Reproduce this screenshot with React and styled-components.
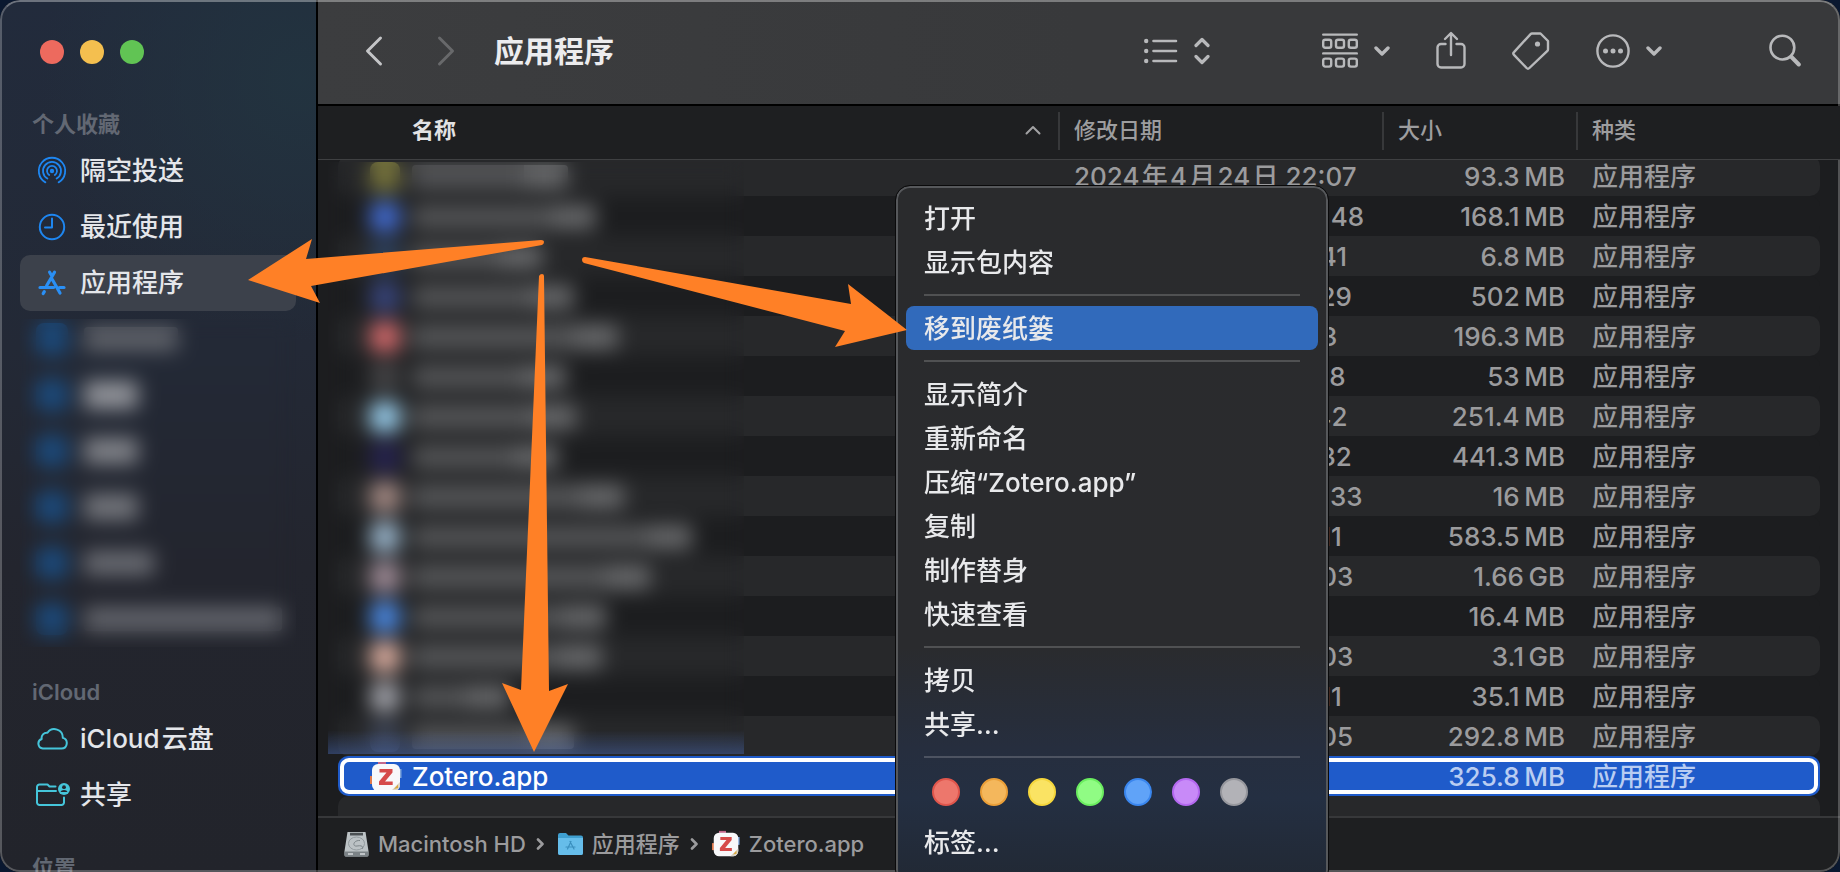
import React, { useLayoutEffect, useRef } from 'react';
import styled, { createGlobalStyle, css } from 'styled-components';

const GlobalStyle = createGlobalStyle`
  *, *::before, *::after { box-sizing: border-box; }
  body {
    margin: 0;
    background: #0a1830;
    color: #e6e6e8;
    font-family: Inter, "Noto Sans CJK SC", sans-serif;
    font-size: 26px;
    line-height: 36px;
  }
  button {
    margin: 0;
    padding: 0;
    border: 0;
    background: none;
    color: inherit;
    font: inherit;
    text-align: left;
  }
  svg { display: block; flex: none; }
`;

const Window = styled.div`
  position: relative;
  display: flex;
  height: 100vh;
  min-height: 600px;
  border-radius: 20px;
  overflow: hidden;
  background: #1c1d1f;

  &::after {
    content: '';
    position: absolute;
    inset: 0;
    border: 2px solid rgba(255, 255, 255, 0.24);
    border-top-color: rgba(255, 255, 255, 0.34);
    border-radius: 20px;
    pointer-events: none;
  }
`;

/* ---------- sidebar ---------- */

const Sidebar = styled.aside`
  flex: none;
  width: 318px;
  padding: 40px 20px 0;
  overflow: hidden;
  border-right: 2px solid #000;
  background:
    radial-gradient(circle at 300px 80px, rgba(34, 52, 64, 0.9), rgba(34, 48, 60, 0) 260px),
    linear-gradient(#222b3c, #232936 40%, #23252e 65%, #22242b);
`;

const TrafficLights = styled.div`
  display: flex;
  gap: 16px;
  height: 39px;
  padding-left: 20px;
`;

const Light = styled.button`
  width: 24px;
  height: 24px;
  border-radius: 50%;
  background: ${(p) => p.$color};
`;

const SectionTitle = styled.h2`
  margin: 0;
  padding: 30px 12px 4px;
  color: #626873;
  font-size: 22px;
  line-height: 30px;
  font-weight: 600;
`;

const PlaceList = styled.ul`
  margin: 0;
  padding: 0;
  list-style: none;
`;

const Place = styled.a`
  display: flex;
  align-items: center;
  gap: 12px;
  height: 56px;
  padding-left: 16px;
  border-radius: 10px;
  color: #e4e6ea;
  font-weight: 500;
  text-decoration: none;
  background: ${(p) => (p.$current ? '#3c414b' : 'transparent')};
`;

const Redacted = styled.div`
  position: relative;

  &::after {
    content: '';
    position: absolute;
    inset: 8px 0 0;
    backdrop-filter: blur(10px);
  }
`;

const HiddenPlace = styled.div`
  display: flex;
  align-items: center;
  gap: 16px;
  height: 56px;
  padding-left: 16px;
`;

const Blob = styled.span`
  flex: none;
  width: ${(p) => p.$size}px;
  height: ${(p) => p.$size}px;
  border-radius: 8px;
  background: ${(p) => p.$color};
`;

const Bar = styled.span`
  flex: none;
  width: ${(p) => p.$width}px;
  height: ${(p) => p.$height || 24}px;
  border-radius: 4px;
  background: ${(p) => p.$color};
`;

/* A file name reads as a dim stem with a denser extension at its end. */
const NameBar = styled(Bar)`
  background: linear-gradient(to left, #67686a 44px, #545557 44px);
`;

/* ---------- toolbar ---------- */

const Main = styled.main`
  flex: 1;
  min-width: 0;
  display: flex;
  flex-direction: column;
`;

const Toolbar = styled.header`
  flex: none;
  display: flex;
  align-items: center;
  height: 106px;
  padding: 0 39px 2px 20px;
  border-bottom: 2px solid #000;
  background: linear-gradient(90deg, #3c3d3f, #38393b 50%, #38393b);
  color: #b8b9bb;
`;

const NavButton = styled.button`
  display: flex;
  justify-content: center;
  width: 72px;
  color: ${(p) => (p.disabled ? '#68696b' : '#c4c5c7')};
`;

const Title = styled.h1`
  flex: 1;
  margin: 0 0 0 12px;
  color: #ececee;
  font-size: 30px;
  line-height: 40px;
  font-weight: 700;
`;

const ToolButton = styled.button`
  display: flex;
  align-items: center;
  gap: 16px;
`;

const ViewButton = styled(ToolButton)`
  margin-right: 112px;
`;

const ToolGroup = styled.div`
  display: flex;
  align-items: center;
  gap: 46px;
  margin-right: 107px;
`;

/* ---------- file list ---------- */

const ListPane = styled.div`
  position: relative;
  flex: 1;
  min-height: 0;
`;

const Scroller = styled.div`
  height: 100%;
  overflow: auto;
  scrollbar-width: none;
`;

const FileTable = styled.table`
  width: 100%;
  table-layout: fixed;
  border-collapse: separate;
  border-spacing: 0;
`;

const Col = styled.col`
  width: ${(p) => p.$width}px;
`;

const HeadCell = styled.th`
  position: sticky;
  top: 0;
  z-index: 2;
  height: 54px;
  padding: 6px 0 9px;
  border-bottom: 1px solid #3f4042;
  background: #1e1f21;
  font-weight: 400;
`;

const SortButton = styled.button`
  display: flex;
  align-items: center;
  width: 100%;
  height: 38px;
  padding: 0 0 2px 14px;
  border-left: 2px solid #37383a;
  color: #9d9d9f;
  font-size: 22px;
  line-height: 30px;
  font-weight: 500;

  ${(p) => p.$active && css`
    justify-content: space-between;
    padding: 0 17px 2px 74px;
    border-left: 0;
    color: #e2e2e4;
    font-weight: 700;
  `}
`;

const Row = styled.tr`
  position: relative;
  color: ${(p) => (p.$selected ? '#b9cdf2' : '#9b9b9d')};
  --fill: ${(p) => (p.$selected ? '#1f5bca' : '#1c1d1f')};

  &:nth-child(odd) { --fill: #27282a; }
`;

const Cell = styled.td`
  height: 40px;
  padding: 2px 0 0 16px;
  background: var(--fill);
  line-height: 38px;
  font-weight: 500;
  white-space: nowrap;
`;

const GutterCell = styled.td`
  padding: 0;
`;

const NameCell = styled(Cell)`
  padding-left: 32px;
  border-radius: 10px 0 0 10px;
  color: #fff;

  ${(p) => p.$ring && css`
    &::after {
      content: '';
      position: absolute;
      inset: 2px 22px;
      border: 4px solid #fff;
      border-radius: 9px;
    }
  `}
`;

const SizeCell = styled(Cell)`
  padding: 2px 11px 0 0;
  text-align: right;
`;

const KindCell = styled(Cell)`
  border-radius: 0 10px 10px 0;
`;

const FileName = styled.div`
  display: flex;
  align-items: center;
  gap: ${(p) => p.$gap || 10}px;
  height: 38px;
`;

const HiddenNames = styled.div`
  position: absolute;
  top: 56px;
  bottom: 62px;
  left: 10px;
  width: 416px;
  backdrop-filter: blur(10px);
  background: linear-gradient(to top, rgba(72, 104, 176, 0.45), rgba(72, 104, 176, 0) 24px);
`;

/* ---------- path bar ---------- */

const PathBar = styled.nav`
  flex: none;
  height: 56px;
  border-top: 2px solid #37383a;
  background: #1e1f21;
`;

const PathList = styled.ol`
  display: flex;
  align-items: center;
  gap: 14px;
  height: 52px;
  margin: 0;
  padding: 0 0 0 26px;
  list-style: none;
`;

const PathItem = styled.li`
  display: flex;
  align-items: center;
  gap: 10px;
`;

const PathLink = styled.a`
  display: flex;
  align-items: center;
  gap: 9px;
  color: #9b9b9d;
  font-size: 22px;
  line-height: 30px;
  font-weight: 500;
  text-decoration: none;
`;

/* ---------- context menu ---------- */

const Menu = styled.div`
  position: absolute;
  z-index: 3;
  top: 186px;
  left: 896px;
  width: 432px;
  padding: 8px 8px 18px;
  border: 2px solid #56585b;
  border-radius: 14px;
  outline: 1px solid #0a0a0b;
  background: linear-gradient(#2a2b2d, #2a2b2e 460px, #262e3e 560px, #242f42 610px, #212833 700px);
`;

const MenuItem = styled.button`
  display: block;
  width: 100%;
  height: 44px;
  padding: 2px 18px 0;
  border-radius: 8px;
  color: #e8e9eb;
  line-height: 42px;
  font-weight: 500;
  white-space: nowrap;
  background: ${(p) => (p.$active ? '#316abb' : 'transparent')};
`;

const MenuRule = styled.hr`
  height: 2px;
  margin: 10px 18px;
  border: 0;
  background: rgba(255, 255, 255, 0.18);
`;

const TagRow = styled.div`
  display: flex;
  gap: 20px;
  padding: 10px 26px 14px;
`;

const TagDot = styled.button`
  width: 28px;
  height: 28px;
  border: 2px solid ${(p) => p.$edge};
  border-radius: 50%;
  background: ${(p) => p.$color};
`;

const Arrows = styled.svg`
  position: absolute;
  z-index: 4;
  top: 0;
  left: 0;
  fill: #ff8026;
  pointer-events: none;
`;

/* ---------- icons ---------- */

const stroke = {
  fill: 'none',
  stroke: 'currentColor',
  strokeLinecap: 'round',
  strokeLinejoin: 'round',
};

const AirDropIcon = () => (
  <svg width="32" height="32" viewBox="0 0 32 32" {...stroke} stroke="#1e86f0" strokeWidth="1.8">
    <circle cx="16" cy="16" r="2.2" fill="#1e86f0" stroke="none" />
    <path d="M13.200 20a5 5 0 1 1 5.600 0" />
    <path d="M11.400 23.600a9 9 0 1 1 9.200 0" />
    <path d="M9.400 27.400a13.200 13.200 0 1 1 13.200 0" />
  </svg>
);

const ClockIcon = () => (
  <svg width="32" height="32" viewBox="0 0 32 32" {...stroke} stroke="#1e86f0" strokeWidth="2">
    <circle cx="16" cy="16" r="12.2" />
    <path d="M16 7.500V16.500H9" />
  </svg>
);

const AppsIcon = () => (
  <svg width="32" height="32" viewBox="0 0 32 32" {...stroke} stroke="#2a8ff5" strokeWidth="3.200">
    <path d="M13.600 5.200L16 9.200M18.500 5.200L10.600 18.800M4 20.500H17.500M16.300 12.500L24 26M23.500 20.500H28M8.300 24.600L7.200 26.500" />
  </svg>
);

const CloudIcon = () => (
  <svg width="32" height="32" viewBox="0 0 32 32" {...stroke} stroke="#45c5da" strokeWidth="2">
    <path d="M6.800 25.500H25.500a5.400 5.400 0 0 0 1.300-10.600A8.400 8.400 0 0 0 11.500 9.800a5.200 5.200 0 0 0-5.800 6.200a4.900 4.900 0 0 0 1.100 9.500z" />
  </svg>
);

const SharedFolderIcon = () => (
  <svg width="32" height="32" viewBox="0 0 32 32" overflow="visible" {...stroke} stroke="#45c5da" strokeWidth="2">
    <path d="M19.500 7.500H13.500L11.500 5.500H3.500a2.500 2.500 0 0 0-2.500 2.500V23.500a2.500 2.500 0 0 0 2.500 2.500H25.500a2.500 2.500 0 0 0 2.500-2.500V18.500M1 12H20" />
    <circle cx="28" cy="10" r="6" fill="#45c5da" stroke="none" />
    <circle cx="28" cy="8.200" r="1.900" fill="#23252e" stroke="none" />
    <path d="M24.500 13a3.600 2.600 0 0 1 7 0z" fill="#23252e" stroke="none" />
  </svg>
);

const BackIcon = () => (
  <svg width="20" height="32" viewBox="0 0 20 32" {...stroke} strokeWidth="3"><path d="M16.500 3L3.500 16L16.500 29" /></svg>
);
const ForwardIcon = () => (
  <svg width="20" height="32" viewBox="0 0 20 32" {...stroke} strokeWidth="3"><path d="M3.500 3L16.500 16L3.500 29" /></svg>
);

const ListIcon = () => (
  <svg width="34" height="28" viewBox="0 0 34 28" {...stroke} strokeWidth="2.600">
    <path d="M9.500 4H32M9.500 14H32M9.500 24H32" />
    <g fill="currentColor" stroke="none"><circle cx="2.200" cy="4" r="2.200" /><circle cx="2.200" cy="14" r="2.200" /><circle cx="2.200" cy="24" r="2.200" /></g>
  </svg>
);
const UpDownIcon = () => (
  <svg width="16" height="28" viewBox="0 0 16 28" {...stroke} strokeWidth="3.200"><path d="M2 8.500L8 2.500L14 8.500M2 19.500L8 25.500L14 19.500" /></svg>
);
const DownIcon = () => (
  <svg width="16" height="12" viewBox="0 0 16 12" {...stroke} strokeWidth="3.400"><path d="M2 3L8 9L14 3" /></svg>
);
const GroupIcon = () => (
  <svg width="36" height="36" viewBox="0 0 36 36" {...stroke} strokeWidth="2.400">
    <path d="M1.200 1.600H34.800M1.200 20.400H34.800" />
    {[6.800, 25.600].map((y) => [1.200, 14, 26.800].map((x) => <rect key={`${x}-${y}`} x={x} y={y} width="8" height="8" rx="2" />))}
  </svg>
);
const ShareIcon = () => (
  <svg width="30" height="40" viewBox="0 0 30 40" {...stroke} strokeWidth="2.400">
    <path d="M9.500 13H5a3.500 3.500 0 0 0-3.500 3.500V33A3.500 3.500 0 0 0 5 36.500H25a3.500 3.500 0 0 0 3.500-3.500V16.500A3.500 3.500 0 0 0 25 13H20.500M15 24V2.500M9 8L15 2L21 8" />
  </svg>
);
const TagIcon = () => (
  <svg width="38" height="38" viewBox="0 0 38 38" {...stroke} strokeWidth="2.400">
    <path d="M20 1.500H28.500L36 9V17.500a2 2 0 0 1-.6 1.400L17.400 36a2 2 0 0 1-2.800 0L2 22.900a2 2 0 0 1 0-2.800L18.600 2.100A2 2 0 0 1 20 1.500z" />
    <circle cx="25.500" cy="12" r="2.600" fill="currentColor" stroke="none" />
  </svg>
);
const MoreIcon = () => (
  <svg width="34" height="34" viewBox="0 0 34 34" {...stroke} strokeWidth="2.400">
    <circle cx="17" cy="17" r="15.600" />
    <g fill="currentColor" stroke="none"><circle cx="9.500" cy="17" r="2.500" /><circle cx="17" cy="17" r="2.500" /><circle cx="24.500" cy="17" r="2.500" /></g>
  </svg>
);
const SearchIcon = () => (
  <svg width="32" height="34" viewBox="0 0 32 34" {...stroke} strokeWidth="2.600">
    <circle cx="13.400" cy="13.600" r="11.900" />
    <path d="M22.500 23L29.800 30.500" strokeWidth="4" />
  </svg>
);
const SortIcon = () => (
  <svg width="16" height="10" viewBox="0 0 16 10" {...stroke} stroke="#a2a2a4" strokeWidth="2"><path d="M1.500 8.500L8 2L14.500 8.500" /></svg>
);
const CrumbIcon = () => (
  <svg width="8" height="14" viewBox="0 0 8 14" {...stroke} stroke="#9b9b9d" strokeWidth="2.600"><path d="M2 2.500L6.500 7L2 11.500" /></svg>
);

const ZoteroIcon = ({ size = 32 }) => (
  <svg width={size} height={size} viewBox="0 0 32 32">
    <rect x="0" y="15" width="5" height="8" fill="#e0794c" />
    <rect x="27" y="8" width="4.500" height="9" fill="#7fa6dc" />
    <rect x="8" y="1" width="8" height="4" fill="#c4688c" />
    <rect x="2" y="3" width="28" height="27" rx="6" fill="#f8f8fa" />
    <path d="M21 30L30 21V24a6 6 0 0 1-6 6z" fill="#d9d2c4" />
    <path d="M24 28L28 23.500V27z" fill="#d8a83c" />
    <path d="M9.500 8H22.500V11.500L15 20.500H22.700V24H9V20.500L16.500 11.500H9.500z" fill="#d64a4a" />
  </svg>
);

const DiskIcon = () => (
  <svg width="25" height="26" viewBox="0 0 25 26">
    <path d="M3.500 1H21.500L24.500 20V24a1.500 1.500 0 0 1-1.500 1.500H2A1.500 1.500 0 0 1 .5 24V20z" fill="#bcc2c5" />
    <path d="M.5 20.500H24.500V24a1.500 1.500 0 0 1-1.500 1.500H2A1.500 1.500 0 0 1 .5 24z" fill="#7c8387" />
    <path d="M6 1.800H19V4.500H6z" fill="#4c5154" />
    <ellipse cx="12.500" cy="12.500" rx="8" ry="6.500" fill="none" stroke="#929a9e" />
    <path d="M16 9.500C9 9 8 16 13 15S20 16 18 18" fill="none" stroke="#7e868a" />
    <path d="M4 23H9M16 23H21" stroke="#d8dcde" strokeWidth="1.500" />
  </svg>
);

const FolderIcon = () => (
  <svg width="25" height="24" viewBox="0 0 25 24">
    <path d="M0 3a2 2 0 0 1 2-2H8L10.500 3.500H23a2 2 0 0 1 2 2V21a2 2 0 0 1-2 2H2a2 2 0 0 1-2-2z" fill="#3f9fd0" />
    <path d="M0 6H25V21a2 2 0 0 1-2 2H2a2 2 0 0 1-2-2z" fill="#66bdea" />
    <path d="M13 9.500L9.500 17M12 9.500L16 17M8 15H17" fill="none" stroke="#3a8fbe" strokeWidth="1.200" strokeLinecap="round" />
  </svg>
);

/* ---------- data ---------- */

const hiddenPlaces = [
  { width: 94, color: '#60636a' },
  { width: 54, color: '#92949a', height: 28 },
  { width: 54, color: '#82848a', height: 26 },
  { width: 54, color: '#74767c', height: 26 },
  { width: 70, color: '#6a6c73' },
  { width: 198, color: '#62646b' },
];

const THIN = '\u2009';
const HAIR = '\u200a';
const date = (y, m, d, time) => `${y}${HAIR}年${HAIR}${m}${HAIR}月${HAIR}${d}${HAIR}日 ${time}`;

const files = [
  { icon: '#77743c', width: 156, date: date(2024, 4, 24, '22:07'), size: '93.3', unit: 'MB' },
  { icon: '#426bd0', width: 184, date: date(2023, 12, 14, '20:48'), size: '168.1', unit: 'MB' },
  { icon: '#2d4260', width: 130, date: date(2024, 4, 23, '21:41'), size: '6.8', unit: 'MB' },
  { icon: '#38457c', width: 162, date: date(2024, 4, 22, '21:29'), size: '502', unit: 'MB' },
  { icon: '#d0686a', width: 206, date: date(2024, 3, 17, '17:13'), size: '196.3', unit: 'MB' },
  { icon: '#444446', width: 154, date: date(2024, 2, 22, '21:18'), size: '53', unit: 'MB' },
  { icon: '#98cdec', width: 164, date: date(2024, 4, 21, '15:42'), size: '251.4', unit: 'MB' },
  { icon: '#262350', width: 146, date: date(2024, 3, 20, '21:32'), size: '441.3', unit: 'MB' },
  { icon: '#a58a84', width: 212, date: date(2023, 12, 16, '20:33'), size: '16', unit: 'MB' },
  { icon: '#9bb6cc', width: 280, date: date(2024, 4, 20, '21:11'), size: '583.5', unit: 'MB' },
  { icon: '#a08c98', width: 238, date: date(2024, 4, 21, '20:03'), size: '1.66', unit: 'GB' },
  { icon: '#4c8ae4', width: 194, date: date(2024, 4, 7, '21:11'), size: '16.4', unit: 'MB' },
  { icon: '#dcaea0', width: 190, date: date(2024, 4, 21, '20:03'), size: '3.1', unit: 'GB' },
  { icon: '#a0a1a8', width: 98, date: date(2024, 4, 20, '21:11'), size: '35.1', unit: 'MB' },
  { icon: '#3d4558', width: 162, date: date(2024, 4, 21, '20:05'), size: '292.8', unit: 'MB' },
];

const tagColors = [
  ['#ed776c', '#e0564c'],
  ['#f4b75c', '#eb9f38'],
  ['#fae363', '#f5d63c'],
  ['#90fc84', '#6bee60'],
  ['#60a3f8', '#3a86ee'],
  ['#c88af8', '#b468f0'],
  ['#b2b2b7', '#96979d'],
];

const menuGroups = [
  ['打开', '显示包内容'],
  ['移到废纸篓'],
  ['显示简介', '重新命名', '压缩“Zotero.app”', '复制', '制作替身', '快速查看'],
  ['拷贝', '共享…'],
];

/* ---------- sections ---------- */

const Places = () => (
  <Sidebar>
    <TrafficLights>
      <Light $color="#ed6a5e" aria-label="关闭" />
      <Light $color="#f4bf4f" aria-label="最小化" />
      <Light $color="#61c454" aria-label="缩放" />
    </TrafficLights>
    <nav>
      <SectionTitle>个人收藏</SectionTitle>
      <PlaceList>
        <li><Place href="#airdrop"><AirDropIcon />隔空投送</Place></li>
        <li><Place href="#recents"><ClockIcon />最近使用</Place></li>
        <li><Place href="#applications" $current aria-current="page"><AppsIcon />应用程序</Place></li>
      </PlaceList>
      <Redacted aria-hidden="true">
        {hiddenPlaces.map((p, i) => (
          <HiddenPlace key={i}>
            <Blob $size={32} $color="#1b4a7c" />
            <Bar $width={p.width} $height={p.height} $color={p.color} />
          </HiddenPlace>
        ))}
      </Redacted>
      <SectionTitle>iCloud</SectionTitle>
      <PlaceList>
        <li><Place href="#icloud"><CloudIcon /><span>iCloud{HAIR}云盘</span></Place></li>
        <li><Place href="#shared"><SharedFolderIcon />共享</Place></li>
      </PlaceList>
      <SectionTitle>位置</SectionTitle>
    </nav>
  </Sidebar>
);

const TopBar = () => (
  <Toolbar>
    <NavButton aria-label="后退"><BackIcon /></NavButton>
    <NavButton aria-label="前进" disabled><ForwardIcon /></NavButton>
    <Title>应用程序</Title>
    <ViewButton aria-label="显示方式"><ListIcon /><UpDownIcon /></ViewButton>
    <ToolGroup>
      <ToolButton aria-label="分组"><GroupIcon /><DownIcon /></ToolButton>
      <ToolButton aria-label="共享"><ShareIcon /></ToolButton>
      <ToolButton aria-label="标签"><TagIcon /></ToolButton>
      <ToolButton aria-label="更多"><MoreIcon /><DownIcon /></ToolButton>
    </ToolGroup>
    <ToolButton aria-label="搜索"><SearchIcon /></ToolButton>
  </Toolbar>
);

const FileList = () => {
  const scroller = useRef(null);
  useLayoutEffect(() => {
    scroller.current.scrollTop = 4;
  }, []);

  return (
    <ListPane>
      <Scroller ref={scroller}>
        <FileTable>
          <colgroup>
            <Col $width={20} /><col /><Col $width={324} /><Col $width={194} /><Col $width={244} /><Col $width={20} />
          </colgroup>
          <thead>
            <tr>
              <HeadCell as="td" />
              <HeadCell scope="col"><SortButton $active>名称<SortIcon /></SortButton></HeadCell>
              <HeadCell scope="col"><SortButton>修改日期</SortButton></HeadCell>
              <HeadCell scope="col"><SortButton>大小</SortButton></HeadCell>
              <HeadCell scope="col"><SortButton>种类</SortButton></HeadCell>
              <HeadCell as="td" />
            </tr>
          </thead>
          <tbody>
            {files.map((f, i) => (
              <Row key={i}>
                <GutterCell />
                <NameCell>
                  <FileName $gap={12} aria-hidden="true">
                    <Blob $size={30} $color={f.icon} />
                    <NameBar $width={f.width} />
                  </FileName>
                </NameCell>
                <Cell>{f.date}</Cell>
                <SizeCell>{f.size}{THIN}{f.unit}</SizeCell>
                <KindCell>应用程序</KindCell>
                <GutterCell />
              </Row>
            ))}
            <Row $selected aria-selected="true">
              <GutterCell />
              <NameCell $ring><FileName><ZoteroIcon />Zotero.app</FileName></NameCell>
              <Cell />
              <SizeCell>325.8{THIN}MB</SizeCell>
              <KindCell>应用程序</KindCell>
              <GutterCell />
            </Row>
            <Row>
              <GutterCell /><NameCell /><Cell /><SizeCell /><KindCell /><GutterCell />
            </Row>
          </tbody>
        </FileTable>
      </Scroller>
      <HiddenNames />
    </ListPane>
  );
};

const Path = () => (
  <PathBar aria-label="路径">
    <PathList>
      <PathItem><PathLink href="#disk"><DiskIcon />Macintosh HD</PathLink><CrumbIcon /></PathItem>
      <PathItem><PathLink href="#applications"><FolderIcon />应用程序</PathLink><CrumbIcon /></PathItem>
      <PathItem><PathLink href="#zotero"><ZoteroIcon size={28} />Zotero.app</PathLink></PathItem>
    </PathList>
  </PathBar>
);

const ContextMenu = () => (
  <Menu role="menu">
    {menuGroups.map((group, g) => (
      <React.Fragment key={g}>
        {group.map((label) => (
          <MenuItem key={label} role="menuitem" $active={label === '移到废纸篓'}>{label}</MenuItem>
        ))}
        <MenuRule />
      </React.Fragment>
    ))}
    <TagRow>
      {tagColors.map(([color, edge]) => (
        <TagDot key={color} $color={color} $edge={edge} aria-label="标签颜色" />
      ))}
    </TagRow>
    <MenuItem role="menuitem">标签…</MenuItem>
  </Menu>
);

const PointerArrows = () => (
  <Arrows width="920" height="760" viewBox="0 0 920 760" aria-hidden="true">
    <path d="M248 280L312 239L306 259L541 240Q544 240 544 242Q544 244 542 245L311 286L320 303z" />
    <path d="M907 330L848 284L851 304L585 257Q582 257 582 260Q582 262 584 263L845 331L835 347z" />
    <path d="M534 752L502 683L521 690L539 276Q540 274 542 274Q544 274 544 276L549 691L568 684z" />
  </Arrows>
);

export default function App() {
  return (
    <>
      <GlobalStyle />
      <Window>
        <Places />
        <Main>
          <TopBar />
          <FileList />
          <Path />
        </Main>
        <ContextMenu />
        <PointerArrows />
      </Window>
    </>
  );
}
